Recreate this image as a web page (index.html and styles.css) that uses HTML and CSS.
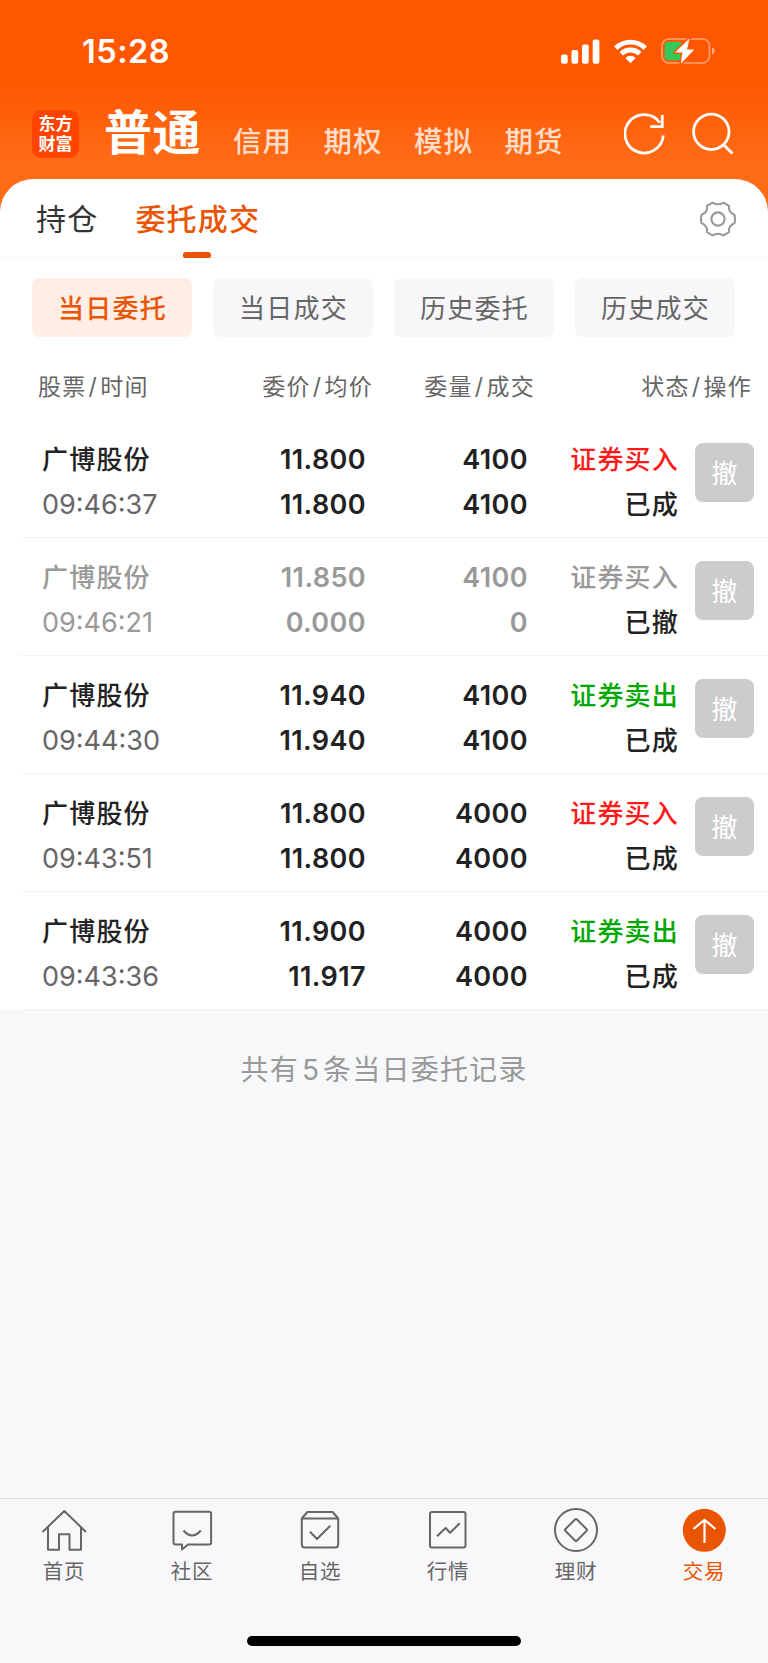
FILE: index.html
```html
<!DOCTYPE html>
<html lang="zh-CN">
<head>
  <meta charset="UTF-8">
  <meta name="viewport" content="width=device-width, initial-scale=1.0">
  <title>委托成交</title>
  <link rel="stylesheet" href="styles.css">
</head>
<body>
  <header class="top">
    <div class="status-bar">
      <span class="clock">15:28</span>
      <svg class="signal" width="39" height="25" viewBox="0 0 39 25" fill="#fff">
        <rect x="0" y="15.5" width="6.7" height="9.3" rx="2"/>
        <rect x="10.5" y="11" width="6.7" height="13.8" rx="2"/>
        <rect x="21" y="5.5" width="6.7" height="19.3" rx="2"/>
        <rect x="31.7" y="0.5" width="6.7" height="24.3" rx="2"/>
      </svg>
      <svg class="wifi" width="33" height="25" viewBox="0 0 33 25">
        <g fill="none" stroke="#fff" stroke-width="4.8">
          <path d="M1.8 9.2a21 21 0 0 1 29.4 0"/>
          <path d="M7.2 14.8a13.3 13.3 0 0 1 18.6 0"/>
        </g>
        <path d="M16.5 24.2l-5.2-5.2a7.4 7.4 0 0 1 10.4 0z" fill="#fff"/>
      </svg>
      <svg class="battery" width="54" height="28" viewBox="0 0 54 28">
        <rect x="1" y="2" width="47.5" height="24" rx="7" fill="none" stroke="#fff" stroke-opacity=".45" stroke-width="1.6"/>
        <path d="M51 10.2q2.8 1 2.8 3.8t-2.8 3.8z" fill="#fff" fill-opacity=".5"/>
        <rect x="3.6" y="4.8" width="17.5" height="18.4" rx="4" fill="#34c759"/>
        <path d="M28.6 1.2L14 15.6h7.4L19.8 26.8 33.3 12.6h-7.3z" fill="#fff" stroke="#ff5700" stroke-width="3" stroke-linejoin="round" paint-order="stroke"/>
      </svg>
    </div>

    <nav class="account-nav">
      <div class="logo"><span>东方</span><span>财富</span></div>
      <a class="account active">普通</a>
      <a class="account">信用</a>
      <a class="account">期权</a>
      <a class="account">模拟</a>
      <a class="account">期货</a>
      <div class="actions">
        <svg width="42" height="44" viewBox="0 0 42 44" fill="none" stroke="#fff" stroke-width="2.8">
          <path d="M39.3 23.5a19.2 19.2 0 1 1-3.4-12.7"/>
          <path d="M38.3 3v11.6H26.2"/>
        </svg>
        <svg width="42" height="44" viewBox="0 0 42 44" fill="none" stroke="#fff" stroke-width="2.8">
          <circle cx="19.3" cy="19.8" r="17.7"/>
          <path d="M31.4 32.4l9 9"/>
        </svg>
      </div>
    </nav>
  </header>

  <main class="panel">
    <div class="tabs">
      <a class="tab">持仓</a>
      <a class="tab active">委托成交</a>
      <svg class="gear" width="38" height="38" viewBox="0 0 38 38" fill="none" stroke="#999" stroke-width="2.1" stroke-linejoin="round">
        <circle cx="19" cy="19" r="6.6"/>
        <path d="M13.5 2.6L8 5.8Q9 12 2.4 15Q1.5 19 2.4 23Q9 26 8 32.2L13.5 35.4Q19 32 24.5 35.4L30 32.2Q29 26 35.6 23Q36.5 19 35.6 15Q29 12 30 5.8L24.5 2.6Q19 6 13.5 2.6Z"/>
      </svg>
    </div>

    <div class="filters">
      <button class="filter active">当日委托</button>
      <button class="filter">当日成交</button>
      <button class="filter">历史委托</button>
      <button class="filter">历史成交</button>
    </div>

    <div class="list-head">
      <span>股票<i>/</i>时间</span>
      <span>委价<i>/</i>均价</span>
      <span>委量<i>/</i>成交</span>
      <span>状态<i>/</i>操作</span>
    </div>

    <div class="order">
      <div class="stock"><b>广博股份</b><time>09:46:37</time></div>
      <div class="num"><span>11.800</span><span>11.800</span></div>
      <div class="num"><span>4100</span><span>4100</span></div>
      <div class="state"><span class="buy">证券买入</span><span>已成</span></div>
      <button class="cancel">撤</button>
    </div>
    <div class="order revoked">
      <div class="stock"><b>广博股份</b><time>09:46:21</time></div>
      <div class="num"><span>11.850</span><span>0.000</span></div>
      <div class="num"><span>4100</span><span>0</span></div>
      <div class="state"><span class="type">证券买入</span><span>已撤</span></div>
      <button class="cancel">撤</button>
    </div>
    <div class="order">
      <div class="stock"><b>广博股份</b><time>09:44:30</time></div>
      <div class="num"><span>11.940</span><span>11.940</span></div>
      <div class="num"><span>4100</span><span>4100</span></div>
      <div class="state"><span class="sell">证券卖出</span><span>已成</span></div>
      <button class="cancel">撤</button>
    </div>
    <div class="order">
      <div class="stock"><b>广博股份</b><time>09:43:51</time></div>
      <div class="num"><span>11.800</span><span>11.800</span></div>
      <div class="num"><span>4000</span><span>4000</span></div>
      <div class="state"><span class="buy">证券买入</span><span>已成</span></div>
      <button class="cancel">撤</button>
    </div>
    <div class="order">
      <div class="stock"><b>广博股份</b><time>09:43:36</time></div>
      <div class="num"><span>11.900</span><span>11.917</span></div>
      <div class="num"><span>4000</span><span>4000</span></div>
      <div class="state"><span class="sell">证券卖出</span><span>已成</span></div>
      <button class="cancel">撤</button>
    </div>
  </main>

  <p class="summary">共有<i>5</i>条当日委托记录</p>

  <footer class="bottom">
    <nav class="tabbar">
      <a class="item">
        <svg width="48" height="48" viewBox="0 0 48 48">
          <path d="M2.5 26L24.3 5 46 26M8 21.5v22.3h11V28.2h10.5v15.6H41V21.5"/>
        </svg>
        <span>首页</span>
      </a>
      <a class="item">
        <svg width="48" height="48" viewBox="0 0 48 48">
          <path d="M7.5 5.8h33.6q2 0 2 2v28.8q0 2-2 2H20l-6 5v-5H7.5q-2 0-2-2V7.8q0-2 2-2z"/>
          <path d="M15.5 24.5q8.5 10 17.3 0"/>
        </svg>
        <span>社区</span>
      </a>
      <a class="item">
        <svg width="48" height="48" viewBox="0 0 48 48">
          <path d="M5.8 12.5h36.4v26q0 3-3 3H8.8q-3 0-3-3zL11.3 6h25.4l5.5 6.5M14 25.8l7 7.2L34.3 19.8"/>
        </svg>
        <span>自选</span>
      </a>
      <a class="item">
        <svg width="48" height="48" viewBox="0 0 48 48">
          <rect x="6" y="6" width="35.5" height="35.5" rx="2"/>
          <path d="M13 30.3l8.6-8.3 4.5 4.8L35.7 17.3"/>
        </svg>
        <span>行情</span>
      </a>
      <a class="item">
        <svg width="48" height="48" viewBox="0 0 48 48">
          <circle cx="24" cy="24" r="21"/>
          <path d="M23 13.5q1-1 2 0l9.5 9.5q1 1 0 2L25 34.5q-1 1-2 0L13.5 25q-1-1 0-2z"/>
        </svg>
        <span>理财</span>
      </a>
      <a class="item active">
        <svg width="48" height="48" viewBox="0 0 48 48">
          <circle class="disc" cx="24.3" cy="24.3" r="21.5"/>
          <path d="M24.5 37V14M13.5 23l11-9.2 11 9.2"/>
        </svg>
        <span>交易</span>
      </a>
    </nav>
    <div class="home-indicator"></div>
  </footer>
</body>
</html>
```

FILE: styles.css
```css
* { box-sizing: border-box; }
body {
  margin: 0;
  min-height: 1663px;
  display: flex;
  flex-direction: column;
  font-family: Inter, 'Noto Sans CJK SC', sans-serif;
  color: #222;
  background: linear-gradient(#ff5700 77px, #ff6c17 165px, #ff6c17 230px, #f7f8fa 230px);
}
svg { display: block; flex: none; }
i { font-style: normal; }
button { border: none; padding: 0; font-family: inherit; }

/* header */
.top { height: 179px; color: #fff; }
.status-bar {
  display: flex;
  align-items: center;
  height: 102px;
  padding-left: 82px;
}
.clock {
  width: 479px;
  font-size: 32.5px;
  font-weight: 600;
  letter-spacing: 0.5px;
}
.wifi { margin-left: 14px; }
.battery { margin-left: 14px; }

.account-nav {
  display: flex;
  align-items: center;
  height: 64px;
  padding-left: 32px;
}
.logo {
  display: flex;
  flex-direction: column;
  align-items: center;
  justify-content: center;
  width: 47px;
  height: 48px;
  border-radius: 9px;
  background: #ff4400;
  font-size: 17px;
  font-weight: 700;
  line-height: 20px;
}
.account {
  margin: 15px 31.5px 0 0;
  font-size: 28.5px;
  font-weight: 500;
  letter-spacing: 1px;
  line-height: 40px;
  color: rgba(255, 255, 255, 0.8);
}
.account.active {
  margin: 0 32px 2px 25px;
  font-size: 48px;
  font-weight: 700;
  letter-spacing: 0.5px;
  line-height: 60px;
  color: #fff;
}
.actions { display: flex; gap: 26px; margin-left: 29px; }

/* white sheet */
.panel {
  border-radius: 33px 33px 0 0;
  background: #fff;
}
.tabs {
  display: flex;
  align-items: center;
  height: 79px;
  padding: 2px 31px 0 36px;
  border-bottom: 1px solid #f5f5f6;
}
.tab {
  position: relative;
  margin-right: 37px;
  font-size: 30px;
  letter-spacing: 1.2px;
  line-height: 76px;
  color: #333;
}
.tab.active { font-weight: 500; color: #ea5504; }
.tab.active::after {
  content: '';
  position: absolute;
  left: 48px;
  bottom: -1px;
  width: 28px;
  height: 6px;
  border-radius: 3px 3px 2px 2px;
  background: #ea5504;
}
.gear { margin-left: auto; }

.filters {
  display: flex;
  justify-content: space-between;
  padding: 20px 33px 0 32px;
}
.filter {
  width: 160px;
  height: 59px;
  padding: 0 0 3px 1px;
  border-radius: 7px;
  font-size: 26px;
  letter-spacing: 1.2px;
  color: #666;
  background: #f7f7fa;
}
.filter.active { font-weight: 500; color: #ea5504; background: #feeee6; }

.list-head {
  display: grid;
  grid-template-columns: 1fr 162px 162px 217px;
  height: 83px;
  padding: 30px 16px 0 38px;
  font-size: 23px;
  letter-spacing: 1.3px;
  line-height: 40px;
  color: #666;
}
.list-head span { text-align: right; }
.list-head span:first-child { text-align: left; }
.list-head i { padding: 0 2px; }

/* orders */
.order {
  display: grid;
  grid-template-columns: 1fr 110px 162px 151px 75px;
  height: 118px;
  margin-left: 20px;
  padding: 17px 14px 0 21px;
  border-bottom: 1px solid #f4f4f5;
  line-height: 45px;
}
.order div { display: flex; flex-direction: column; }
.order .num, .order .state { align-items: flex-end; }
.stock b, .state {
  font-size: 26px;
  font-weight: 500;
  letter-spacing: 1.2px;
}
.stock b { padding-left: 1px; }
.stock time { padding-left: 1px; font-size: 27px; color: #666; }
.num { font-size: 27px; font-weight: 600; letter-spacing: 0.4px; }
.buy { color: #ff1a1a; }
.sell { color: #00a800; }
.cancel {
  justify-self: end;
  width: 59px;
  height: 59px;
  margin-top: 6px;
  padding-bottom: 3px;
  border-radius: 8px;
  font-size: 26px;
  color: #fff;
  background: #ccc;
}
.revoked .stock b, .revoked time, .revoked .num, .revoked .type { color: #999; }

.summary {
  flex: 1;
  margin: 0;
  padding-top: 40px;
  text-align: center;
  font-size: 28px;
  letter-spacing: 1.2px;
  line-height: 40px;
  color: #999;
  background: #f7f8fa;
}
.summary i { padding: 0 3px; }

/* bottom bar */
.bottom {
  height: 165px;
  border-top: 1px solid #dfdfe1;
  background: #f8f8fb;
}
.tabbar { display: grid; grid-template-columns: repeat(6, 1fr); }
.item {
  display: flex;
  flex-direction: column;
  align-items: center;
  padding-top: 7px;
  font-size: 20.5px;
  letter-spacing: 0.8px;
  line-height: 30px;
  color: #666;
}
.item svg { fill: none; stroke: #666; stroke-width: 2; stroke-linejoin: round; }
.item span { margin-top: 3px; }
.item.active { color: #ea5504; }
.item.active svg { stroke: #fff; stroke-width: 2.2; }
.item .disc { fill: #ea5504; stroke: none; }
.home-indicator {
  width: 274px;
  height: 10px;
  margin: 49px auto 0;
  border-radius: 5px;
  background: #000;
}
```
